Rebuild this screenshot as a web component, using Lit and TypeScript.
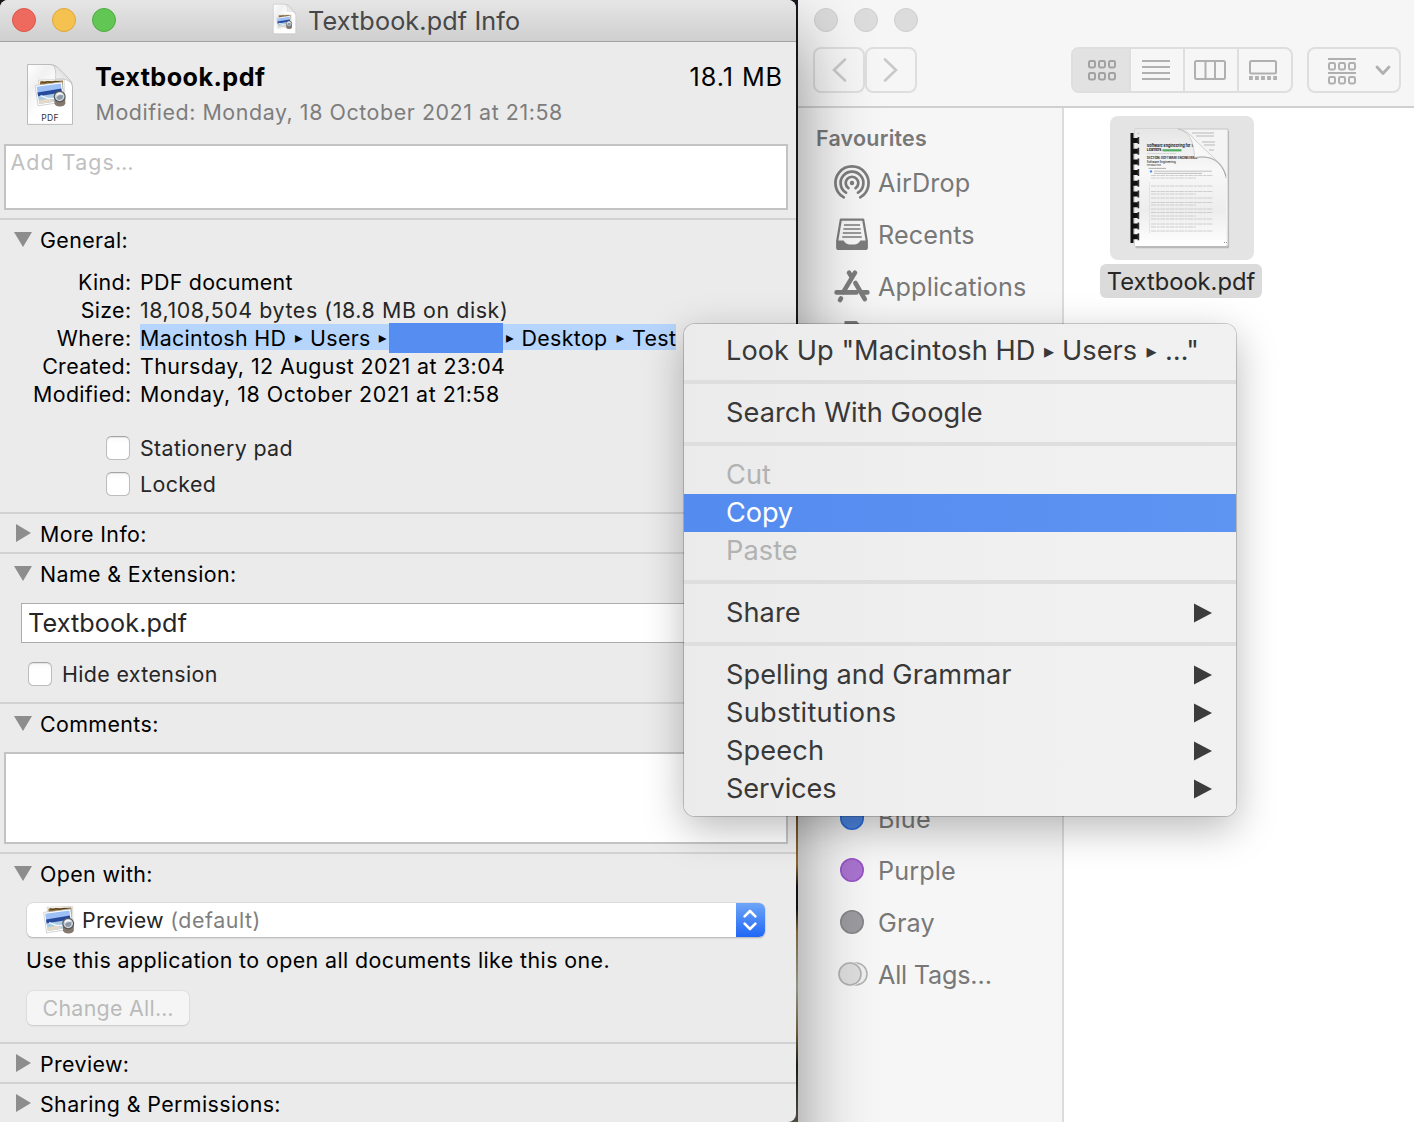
import { LitElement, html, svg, css, nothing } from "lit";
import { customElement, property } from "lit/decorators.js";
import { classMap } from "lit/directives/class-map.js";

const base = css`
  * { box-sizing: border-box; }
  svg { display: block; flex: none; overflow: visible; }
`;

/* Two stacked photographs with a loupe in the corner, in a 32x28 box. */
const photoArt = svg`
  <g>
    <path d="M4 1.2 L29.6 .4 L30 16 L6 20 Z" fill="#fff" stroke="#b9b4ac" stroke-width=".5"/>
    <path d="M5.4 2.4 L28.4 1.6 L28.8 16 L6 18 Z" fill="#8a6a35"/>
    <path d="M7 2.6 l3 1.2 3 -1.3 4 1 4 -1.2 5 1" fill="none" stroke="#4f3a18" stroke-width="1"/>
    <path d="M.6 6.4 L27.6 2.9 L30 22.8 L3.6 26.8 Z" fill="#fff" stroke="#b5b5b5" stroke-width=".6"/>
    <path d="M2.2 7.8 L26.4 4.5 L27 10.6 L3.3 15.6 Z" fill="#9dc0f7"/>
    <path d="M3 13.6 L26.9 9.6 L27.6 14.4 L3.7 18.2 Z" fill="#284a9c"/>
    <path d="M3.6 17.2 L27.5 13.4 L28.6 21.4 L4.8 25 Z" fill="#a9cbe4"/>
    <path d="M4.4 21.5 L14 19.4 L20 22.6 L4.8 25 Z" fill="#e3d9c6"/>
    <path d="M6 16.6 l7 2.6 8 .6" stroke="#f2f6fb" stroke-width="1.4" fill="none"/>
    <path d="M20 19 h10.8 v5.6 q-.8 3 -5.4 3 t-5.4 -3z" fill="#84776b"/>
    <ellipse cx="25.2" cy="17.6" rx="5.4" ry="5.2" fill="#cfd4d9" stroke="#55585b" stroke-width="1.2"/>
    <path d="M22 18.2 q3 -3.6 6.6 -1.6 l-.6 3 q-2.6 2.2 -5 .6z" fill="#8b98a6"/>
    <path d="M22 16.2 q2.6 -3 5.4 -1" stroke="#fff" stroke-width="1.2" fill="none"/>
  </g>`;

/* Paper sheet with a folded corner that carries the photo art. */
const sheetIcon = (w: number, h: number, label: boolean) => html`
  <svg width=${w} height=${h} viewBox="0 0 46 61" preserveAspectRatio="none">
    <defs>
      <linearGradient id="fold" x1="0" y1="1" x2="1" y2="0">
        <stop offset="0" stop-color="#fff" /><stop offset="1" stop-color="#c9c9c9" />
      </linearGradient>
      <linearGradient id="paper" x1="0" y1="0" x2="1" y2="1">
        <stop offset="0" stop-color="#fff" /><stop offset=".25" stop-color="#f1f1f1" /><stop offset=".5" stop-color="#fff" />
      </linearGradient>
    </defs>
    <path d="M.5 .5 H24 Q29 1 32 5 L41 14 Q45.5 18 45.5 23 V60.4 H.5 Z" fill="url(#paper)" stroke="#b4b4b4" stroke-width=".9" />
    <path d="M26 .8 Q29.5 5 28.6 15 Q40 13.4 45.2 20 Q43 15.5 36 8.6 Q31 2.4 26 .8Z" fill="url(#fold)" stroke="#bcbcbc" stroke-width=".7" />
    <g transform=${label ? "translate(7.5 15)" : "translate(5.5 21) scale(1.05 1.08)"}>${photoArt}</g>
    ${label ? svg`<text x="23" y="57" text-anchor="middle" font-size="8.6" letter-spacing=".2" font-family="Inter, sans-serif" fill="#333">PDF</text>` : nothing}
  </svg>`;

@customElement("check-box")
class CheckBox extends LitElement {
  @property() label = "";
  static styles = [base, css`
    :host { display: flex; align-items: center; gap: 10px; height: 36px; color: #262626; letter-spacing: 0.37px; line-height: 28px; }
    .box { width: 24px; height: 24px; border-radius: 5.5px; background: linear-gradient(#fafafa, #fff 30%);
      border: 1px solid #bdbdbd; border-top-color: #a4a4a4; box-shadow: inset 0 1px 1px rgba(0,0,0,.09); }
  `];
  render() {
    return html`<span class="box"></span><span>${this.label}</span>`;
  }
}

@customElement("info-section")
class InfoSection extends LitElement {
  @property() heading = "";
  @property({ type: Boolean }) open = false;
  static styles = [base, css`
    :host { display: block; border-top: 2px solid #d2d2d2; }
    .head { height: 38px; padding: 6px 0 4px 14px; display: flex; gap: 8px; line-height: 28px; letter-spacing: 0.38px; color: #000; }
    .mark { width: 18px; height: 18px; margin-top: 4px; }
  `];
  render() {
    return html`
      <div class="head">
        <svg class="mark" viewBox="0 0 18 18">
          ${this.open
            ? svg`<path d="M0 2 H18 L9 17 Z" fill="#8d8d8d"/>`
            : svg`<path d="M2 0 V18 L17 9 Z" fill="#8d8d8d"/>`}
        </svg>
        <span>${this.heading}</span>
      </div>
      <slot></slot>`;
  }
}

@customElement("info-window")
class InfoWindow extends LitElement {
  static styles = [base, css`
    :host { display: flex; flex-direction: column; width: 796px; height: 1122px; background: #ebebeb;
      border-radius: 8px 8px 8px 0; overflow: hidden; }
    .title { height: 42px; flex: none; display: flex; align-items: center; padding: 0 0 2px 12px;
      background: linear-gradient(#e6e6e6, #cfcfcf); border-bottom: 1px solid #a3a3a3; }
    .lights { display: flex; gap: 16px; }
    .light { width: 24px; height: 24px; border-radius: 50%; }
    .red { background: #ee6a5f; border: 1px solid #dc5548; }
    .amber { background: #f5c250; border: 1px solid #dca63a; }
    .green { background: #62c655; border: 1px solid #50ac42; }
    .title-icon { margin: -1px 0 0 156.5px; }
    .title-text { margin: 3px 0 0 12.5px; font-size: 25.2px; letter-spacing: 0.12px; color: #474747; }
    .summary { height: 102px; flex: none; display: flex; padding: 22px 13px 0 27px; }
    .names { margin: -3px auto 0 22px; }
    .name { font-size: 25.2px; font-weight: 700; letter-spacing: 0.44px; line-height: 32px; color: #000; }
    .mod { letter-spacing: 0.57px; line-height: 28px; color: #7d7d7d; margin: 5px 0 0 0.5px; }
    .size { font-size: 25.2px; letter-spacing: 0.93px; line-height: 32px; margin-top: -3px; color: #000; }
    .area { margin: 0 8px 8px 4px; border: 2px solid #c3c3c3; background: #fff; flex: none; }
    .tags { height: 66px; padding: 2px 4.5px; line-height: 28px; color: #c0c0c0; letter-spacing: 1.1px; }
    .note { height: 92px; margin-top: 10px; }
    .details { padding-top: 10px; color: #000; }
    .row { display: grid; grid-template-columns: 132px 1fr; column-gap: 8px; height: 28px; line-height: 28px; }
    .key { text-align: right; letter-spacing: 0.34px; padding-right: .6px; }
    .val { letter-spacing: 0.44px; white-space: nowrap; }
    .kind { letter-spacing: 0.28px; }
    .num { letter-spacing: 0.58px; color: #262626; }
    .date { letter-spacing: 0.55px; }
    .path { display: grid; grid-template-columns: 148px 22px 61px 18.5px 113px 19px 87.5px 23px 44px; width: 536px;
      height: 26px; background: #b6d5fc; letter-spacing: 0.34px; line-height: 28px; }
    .path i { font: 15.5px/29px "DejaVu Sans", sans-serif; text-align: center; letter-spacing: 0; height: 26px; }
    .path i.first { padding-left: 5px; }
    .path i.next { margin-left: -4px; }
    .redact { background: #568df0; height: 30px; margin: -1px 0 0 -0.5px; }
    .checks { padding: 22px 0 10px 106px; }
    .checks.hide { padding: 13px 0 10px 28px; }
    .field { margin: 11px 20px 0 21px; height: 40px; border: 1px solid #acacac; background: #fff; padding-left: 6px;
      font-size: 25.2px; line-height: 39px; letter-spacing: 0.11px; color: #262626; }
    .popup { margin: 11px 31px 0 27px; height: 34px; border-radius: 6px; background: #fff; display: flex; align-items: center;
      box-shadow: 0 0 0 .5px #cfcfcf, 0 1px 1.5px rgba(0,0,0,.32); overflow: hidden; padding-left: 16px; color: #262626; }
    .popup .app { margin-left: 7px; letter-spacing: 0.22px; }
    .popup .def { margin: 0 auto 0 6.5px; color: #7f7f7f; letter-spacing: 0.55px; }
    .step { width: 29px; height: 34px; background: linear-gradient(#6ea5f7, #1f67f5); display: grid; place-items: center; padding-right: 1px; }
    .hint { margin: 9px 0 0 26px; line-height: 28px; letter-spacing: 0.41px; color: #000; }
    .button { margin: 17px 0 17px 27px; width: 162px; height: 34px; border-radius: 6px; background: #f5f5f5;
      box-shadow: 0 0 0 .5px #d6d6d6, 0 1px 1.5px rgba(0,0,0,.16); color: #bababa; letter-spacing: 0.29px; line-height: 34px; padding-left: 15.5px; }
  `];
  render() {
    return html`
      <div class="title">
        <div class="lights"><span class="light red"></span><span class="light amber"></span><span class="light green"></span></div>
        <div class="title-icon">${sheetIcon(23, 30, false)}</div>
        <div class="title-text">Textbook.pdf Info</div>
      </div>
      <div class="summary">
        ${sheetIcon(46, 61, true)}
        <div class="names">
          <div class="name">Textbook.pdf</div>
          <div class="mod">Modified: Monday, 18 October 2021 at 21:58</div>
        </div>
        <div class="size">18.1 MB</div>
      </div>
      <div class="area tags">Add Tags…</div>
      <info-section heading="General:" open>
        <div class="details">
          <div class="row"><span class="key">Kind:</span><span class="val kind">PDF document</span></div>
          <div class="row"><span class="key">Size:</span><span class="val num">18,108,504 bytes (18.8 MB on disk)</span></div>
          <div class="row"><span class="key">Where:</span><span class="path">
            <span>Macintosh HD</span><i>▸</i><span>Users</span><i class="first">▸</i><span class="redact"></span><i class="next">▸</i><span>Desktop</span><i>▸</i><span>Test</span>
          </span></div>
          <div class="row"><span class="key">Created:</span><span class="val">Thursday, 12 August 2021 at 23:04</span></div>
          <div class="row"><span class="key">Modified:</span><span class="val date">Monday, 18 October 2021 at 21:58</span></div>
        </div>
        <div class="checks"><check-box label="Stationery pad"></check-box><check-box label="Locked"></check-box></div>
      </info-section>
      <info-section heading="More Info:"></info-section>
      <info-section heading="Name &amp; Extension:" open>
        <div class="field">Textbook.pdf</div>
        <div class="checks hide"><check-box label="Hide extension"></check-box></div>
      </info-section>
      <info-section heading="Comments:" open><div class="area note"></div></info-section>
      <info-section heading="Open with:" open>
        <div class="popup">
          <svg width="32" height="28" viewBox="0 0 32 28">${photoArt}</svg>
          <span class="app">Preview</span><span class="def">(default)</span>
          <span class="step"><svg width="14" height="22" viewBox="0 0 14 22" fill="none" stroke="#fff" stroke-width="2.6" stroke-linecap="round" stroke-linejoin="round">
            <path d="M1.6 7.4 L7 2 L12.4 7.4 M1.6 14.6 L7 20 L12.4 14.6"/></svg></span>
        </div>
        <div class="hint">Use this application to open all documents like this one.</div>
        <div class="button">Change All…</div>
      </info-section>
      <info-section heading="Preview:"></info-section>
      <info-section heading="Sharing &amp; Permissions:"></info-section>
    `;
  }
}

const squares = (x: number, y: number) => [0, 10, 20].map((d) => svg`<rect x=${x + d} y=${y} width="6" height="6.4" rx="1.4"/>`);
const viewIcons = {
  grid: svg`${squares(1, 1)}${squares(1, 13)}`,
  list: svg`<path d="M0 1 H28 M0 7 H28 M0 13 H28 M0 19 H28"/>`,
  columns: svg`<rect x="-1" y="1" width="30" height="18" rx="1.5"/><path d="M9.5 1 V19 M19 1 V19"/>`,
  gallery: svg`<rect x="1" y="1" width="26" height="12.6" rx="1.5"/><path d="M0 18 H28" stroke-width="4" stroke-dasharray="3.8 2.25"/>`,
  group: svg`<path d="M0 -1 H28 M0 13 H28"/>${squares(1, 3)}${squares(1, 17)}`,
};
const viewIcon = (name: keyof typeof viewIcons) => html`
  <svg width="28" height="20" viewBox="0 0 28 20" fill="none" stroke="currentColor" stroke-width="2">${viewIcons[name]}</svg>`;

const sideIcons = {
  airdrop: svg`<g fill="none" stroke="#7c7c7c" stroke-width="2.7" stroke-linecap="round">
    <path d="M-8.2 14.4 A16.6 16.6 0 1 1 8.2 14.4"/><path d="M-6 9.7 A11.4 11.4 0 1 1 6 9.7"/><path d="M-3.6 5.2 A6.3 6.3 0 1 1 3.6 5.2"/></g>
    <circle r="2.2" fill="#7c7c7c"/>`,
  recents: svg`<path d="M-11.2 -15.4 H11.2 L14.8 6 V13 Q14.8 14 13.8 14 H-13.8 Q-14.8 14 -14.8 13 V6 Z" fill="none" stroke="#7c7c7c" stroke-width="2.2" stroke-linejoin="round"/>
    <path d="M-15 5.4 H-8.4 Q-6.5 9.6 0 9.6 T8.4 5.4 H15 V13 Q15 14.8 13.6 14.8 H-13.6 Q-15 14.8 -15 13Z" fill="#7c7c7c"/>
    <path d="M-8 -10 H8 M-8.6 -6 H8.6 M-9.2 -2 H9.2 M-9.8 2 H9.8" stroke="#7c7c7c" stroke-width="1.7"/>`,
  apps: svg`<g fill="none" stroke="#7c7c7c" stroke-width="4.6" stroke-linecap="round">
    <path d="M3 -14.4 L-9 5.6 M-3 -14.4 L0 -9.4 M-15.4 5.4 H4.4 M11 5.4 H15.4"/><path d="M3.4 -4 L12.8 12.2"/><path d="M-11 11.4 L-12 13"/></g>`,
  doc: svg`<path d="M-6 17 V-16.5 H4 L9 -11.5 V17Z" fill="none" stroke="#7c7c7c" stroke-width="3"/>`,
  blue: svg`<circle r="11.2" cy="-1" fill="#4f88e4" stroke="#2b6de0" stroke-width="1.6"/>`,
  purple: svg`<circle r="11.2" cy="-1" fill="#aa74cf" stroke="#9753c7" stroke-width="1.6"/>`,
  gray: svg`<circle r="11.2" cy="-1" fill="#9c9ca0" stroke="#858589" stroke-width="1.6"/>`,
  all: svg`<circle r="11" cx="4" cy="-1" fill="#efefef" stroke="#b3b3b3" stroke-width="1.6"/><circle r="12.4" cx="-2" cy="-1" fill="#f0f0f0"/><circle r="11" cx="-2" cy="-1" fill="#dedede" stroke="#b0b0b0" stroke-width="1.6"/>`,
};
type Side = { icon: keyof typeof sideIcons; label: string; tight?: boolean };
const places: Side[] = [
  { icon: "airdrop", label: "AirDrop" }, { icon: "recents", label: "Recents" },
  { icon: "apps", label: "Applications" }, { icon: "doc", label: "" },
];
const tags: Side[] = [
  { icon: "blue", label: "Blue" }, { icon: "purple", label: "Purple" },
  { icon: "gray", label: "Gray" }, { icon: "all", label: "All Tags…", tight: true },
];

@customElement("finder-window")
class FinderWindow extends LitElement {
  static styles = [base, css`
    :host { display: flex; flex-direction: column; width: 616px; height: 1122px; background: #f6f6f6; overflow: hidden; }
    .top { height: 108px; flex: none; border-bottom: 2px solid #d0d0d0; padding: 8px 13px 0 16px; }
    .lights { display: flex; gap: 16px; }
    .light { width: 24px; height: 24px; border-radius: 50%; background: #dcdcdc; border: 1px solid #cecece; }
    .tools { display: flex; margin: 15px 0 0 -1px; color: #b0b0b0; }
    .btn, .segs { height: 46px; border: 2px solid #dedede; border-radius: 8px; display: grid; place-items: center; }
    .btn { width: 52px; color: #c9c9c9; }
    .segs { width: 222px; margin: 0 14px 0 auto; display: grid; grid-template-columns: 56px 54px 54px 1fr; overflow: hidden; }
    .seg { height: 42px; width: 100%; display: grid; place-items: center; border-left: 2px solid #dedede; padding-right: 2px; }
    .seg:first-child { background: #e2e2e2; border: 0; color: #a2a2a2; padding: 0 0 0 2px; }
    .seg:last-child { padding-right: 5px; }
    .drop { width: 94px; display: flex; justify-content: flex-start; align-items: center; gap: 20px; padding-left: 19px; border: 2px solid #dedede; height: 46px; border-radius: 8px; }
    .main { flex: 1; display: flex; }
    .side { width: 266px; border-right: 2px solid #dcdcdc; padding-top: 16px; color: #787878; }
    .fav { font-size: 21.4px; font-weight: 600; letter-spacing: 0.26px; line-height: 28px; padding-left: 18px; height: 33px; }
    .item { height: 52px; display: flex; align-items: center; font-size: 25.2px; letter-spacing: 0.14px; padding-left: 36px; gap: 8px; }
    .tight { letter-spacing: -0.2px; }
    .gap { height: 428px; }
    .files { flex: 1; background: #fff; padding: 8px 0 0 36px; }
    .file { width: 162px; display: flex; flex-direction: column; align-items: center; gap: 4px; }
    .thumb { width: 144px; height: 144px; margin-left: 2px; border-radius: 8px; background: #e4e4e4; }
    .label { width: 162px; height: 34px; border-radius: 6px; background: #dbdbdb; color: #262626; font-size: 23.7px; line-height: 36px; text-align: center; }
  `];
  item(s: Side) {
    return html`<div class="item">
      <svg width="36" height="36" viewBox="-18 -18 36 36">${sideIcons[s.icon]}</svg>
      <span class=${classMap({ tight: !!s.tight })}>${s.label}</span></div>`;
  }
  render() {
    const lines = [60.5, 63, 71, 76.5, 79, 83, 87.5, 90, 94, 97.5, 101, 104, 109, 112, 116].map((y) => y - 1);
    return html`
      <div class="top">
        <div class="lights"><span class="light"></span><span class="light"></span><span class="light"></span></div>
        <div class="tools">
          <div class="btn"><svg width="14" height="24" viewBox="0 0 14 24" fill="none" stroke="currentColor" stroke-width="2.6" stroke-linecap="round"><path d="M13 1.5 L2 12 L13 22.5"/></svg></div>
          <div class="btn"><svg width="14" height="24" viewBox="0 0 14 24" fill="none" stroke="currentColor" stroke-width="2.6" stroke-linecap="round"><path d="M1 1.5 L12 12 L1 22.5"/></svg></div>
          <div class="segs">
            <div class="seg">${viewIcon("grid")}</div><div class="seg">${viewIcon("list")}</div>
            <div class="seg">${viewIcon("columns")}</div><div class="seg">${viewIcon("gallery")}</div>
          </div>
          <div class="drop">${viewIcon("group")}
            <svg width="14" height="9" viewBox="0 0 14 9" fill="none" stroke="currentColor" stroke-width="2.8" stroke-linecap="round" stroke-linejoin="round"><path d="M1 1 L7 7.5 L13 1"/></svg>
          </div>
        </div>
      </div>
      <div class="main">
        <div class="side">
          <div class="fav">Favourites</div>
          ${places.map((p) => this.item(p))}
          <div class="gap"></div>
          ${tags.map((p) => this.item(p))}
        </div>
        <div class="files">
          <div class="file">
            <svg class="thumb" viewBox="0 0 144 144">
              <defs>
                <linearGradient id="pg" x1="0" y1="0" x2="0" y2="1"><stop offset="0" stop-color="#e6e6e6"/><stop offset=".35" stop-color="#f8f8f8"/><stop offset=".7" stop-color="#ededed"/><stop offset="1" stop-color="#fff"/></linearGradient>
                <linearGradient id="curl" x1="0" y1="1" x2="1" y2="0"><stop offset="0" stop-color="#d4d4d4"/><stop offset=".3" stop-color="#fff"/><stop offset=".7" stop-color="#f1f1f1"/><stop offset="1" stop-color="#b4b4b4"/></linearGradient>
              </defs>
              <path d="M25 13.5 H118.5 V131 H25Z" fill="#777" opacity=".4" transform="translate(.6 1.2)"/>
              <path d="M25 13 H118 V130 H25Z" fill="#f4f4f4" stroke="#bcbcbc" stroke-width=".8"/>
              <path d="M82 17 H104 M86 20 H104 M92 26 H105 M94 29 H105 M99 34 H104" stroke="#b8b8b8" stroke-width="1"/>
              <path d="M25 13 H70 Q80 14 85 24 L104 42 Q116 50 116 62 V130 H25Z" fill="url(#pg)"/>
              <path d="M20.5 17 H23.5 V127 H20.5Z" fill="#111"/>
              <path d="M25.5 19 V126" stroke="#111" stroke-width="6" stroke-dasharray="5 5.7" stroke-dashoffset="-3"/>
              <path d="M28.4 17 V127" stroke="#333" stroke-width="1.6" stroke-dasharray="7 3.7" stroke-dashoffset="-4"/>
              <g font-family="Inter, sans-serif" fill="#1c1c1c">
                <text x="36.8" y="31" font-size="3.7" font-weight="700" textLength="47">Software Engineering for S</text>
                <text x="36.8" y="35.4" font-size="3.7" font-weight="700" textLength="14.5">Learners</text>
                <text x="36.8" y="42.6" font-size="2.9" font-weight="700" textLength="50.5">SECTION: SOFTWARE ENGINEERING</text>
                <text x="36.8" y="46.8" font-size="2.9" font-weight="500" textLength="29">Software Engineering</text>
                <text x="36.8" y="50.4" font-size="2.4" textLength="14">Introduction</text>
              </g>
              <path d="M52.5 34.3 H71.5" stroke="#4fae62" stroke-width="2.2"/>
              <path d="M37 37.5 H66" stroke="#d0d0d0" stroke-width=".8"/>
              <path d="M38.5 52.4 H56" stroke="#a5a5a5" stroke-width=".9"/>
              <circle cx="41" cy="55.4" r="1.2" fill="#4b8ff0"/>
              <path d="M44 55.2 H102 M44 57.4 H92" stroke="#b4b4b4" stroke-width=".8"/>
              <path d=${lines.map((y, i) => `M41 ${y} H${i % 3 === 1 ? 86 : 103}`).join(" ")} stroke="#c9c9c9" stroke-width=".9" stroke-dasharray="5 .7 3 .6"/>
              <path d="M39.5 66 V117" stroke="#d8d8d8" stroke-width=".6"/>
              <path d="M68 13 Q84 16 84.5 42 Q112 37 116 62 Q116 52 104 42 L85 24 Q78 15 68 13Z" fill="url(#curl)" stroke="#bababa" stroke-width=".6"/>
              <path d="M84.5 41.6 Q108 37 116 60" fill="none" stroke="#999" stroke-width="1" opacity=".75"/>
              <path d="M114 126.5 h1 M116 126.5 h.8" stroke="#888" stroke-width="1"/>
            </svg>
            <div class="label">Textbook.pdf</div>
          </div>
        </div>
      </div>`;
  }
}

type Entry = { text: string; state?: string; more?: boolean; cls?: string };
const groups: Entry[][] = [
  [{ text: "Search With Google", cls: "s0" }],
  [{ text: "Cut", state: "off", cls: "s0" }, { text: "Copy", state: "on", cls: "sn" }, { text: "Paste", state: "off", cls: "s0" }],
  [{ text: "Share", more: true, cls: "s0" }],
  [{ text: "Spelling and Grammar", more: true, cls: "s0" }, { text: "Substitutions", more: true, cls: "s2" },
   { text: "Speech", more: true, cls: "s1" }, { text: "Services", more: true, cls: "sn" }],
];

@customElement("context-menu")
class ContextMenu extends LitElement {
  static styles = [base, css`
    :host { display: block; width: 552px; height: 492px; padding: 8px 0; border-radius: 11px;
      background: linear-gradient(90deg, #ebebeb, #f0f0f0 60%, #f1f1f1); color: #383838; font-size: 27.2px;
      box-shadow: 0 0 0 1px rgba(0,0,0,.18), 0 12px 40px rgba(0,0,0,.28); }
    .item { height: 38px; line-height: 36px; padding: 0 24px 0 42px; display: flex; justify-content: space-between; align-items: center; white-space: pre; }
    .item svg { margin-top: -1px; }
    .rule { height: 4px; margin: 10px 0; background: #dedede; }
    .off { color: #b2b2b2; }
    .on { color: #fff; background: linear-gradient(90deg, #548bef, #5e94f2); }
    .s0 { letter-spacing: 0.05px; }
    .s1 { letter-spacing: 0.12px; }
    .s2 { letter-spacing: 0.24px; }
    .sn { letter-spacing: -0.14px; }
    .look { display: grid; grid-template-columns: 310px 26px 76px 27px auto; justify-content: start; letter-spacing: 0.04px; }
    .look i { font: 20px/36px "DejaVu Sans", sans-serif; text-align: center; letter-spacing: 0; height: 36px; }
  `];
  render() {
    return html`
      <div class="item look"><span>Look Up "Macintosh HD</span><i>▸</i><span>Users</span><i>▸</i><span>…"</span></div>
      ${groups.map((g) => html`<div class="rule"></div>${g.map((e) => html`
        <div class="item ${e.state ?? ""}"><span class=${e.cls ?? ""}>${e.text}</span>
          ${e.more ? html`<svg width="18" height="20" viewBox="0 0 18 20"><path d="M0 .5 V19.5 L18 10Z" fill="#3c3c3c"/></svg>` : nothing}
        </div>`)}`)}`;
  }
}

@customElement("app-root")
class AppRoot extends LitElement {
  static styles = [base, css`
    :host { display: block; width: 1414px; height: 1122px; position: relative; overflow: hidden;
      font-family: Inter, "Liberation Sans", sans-serif; font-size: 21.4px; color: #000; }
    .desk { display: flex; gap: 2px; height: 1122px;
      background: linear-gradient(#15171b 0, #15171b 72%, #6b4a22 73%, #8a6530 77%, #14100f 79%, #14100f 81%, #7a6138 83%, #8f9483 88%, #6a5a3a 92%, #1c1b15 95%, #4f4a40 100%); }
    info-window { position: relative; z-index: 1; flex: none; }
    finder-window { flex: none; }
    .cast { position: absolute; left: 798px; top: 0; width: 616px; height: 1122px; overflow: hidden; pointer-events: none; }
    .cast::before { content: ""; position: absolute; left: -798px; top: 0; width: 796px; height: 1180px;
      box-shadow: 0 34px 70px rgba(0,0,0,.46); }
    context-menu { position: absolute; left: 684px; top: 324px; z-index: 2; }
  `];
  render() {
    return html`
      <div class="desk"><info-window></info-window><finder-window></finder-window></div>
      <div class="cast"></div>
      <context-menu></context-menu>`;
  }
}
